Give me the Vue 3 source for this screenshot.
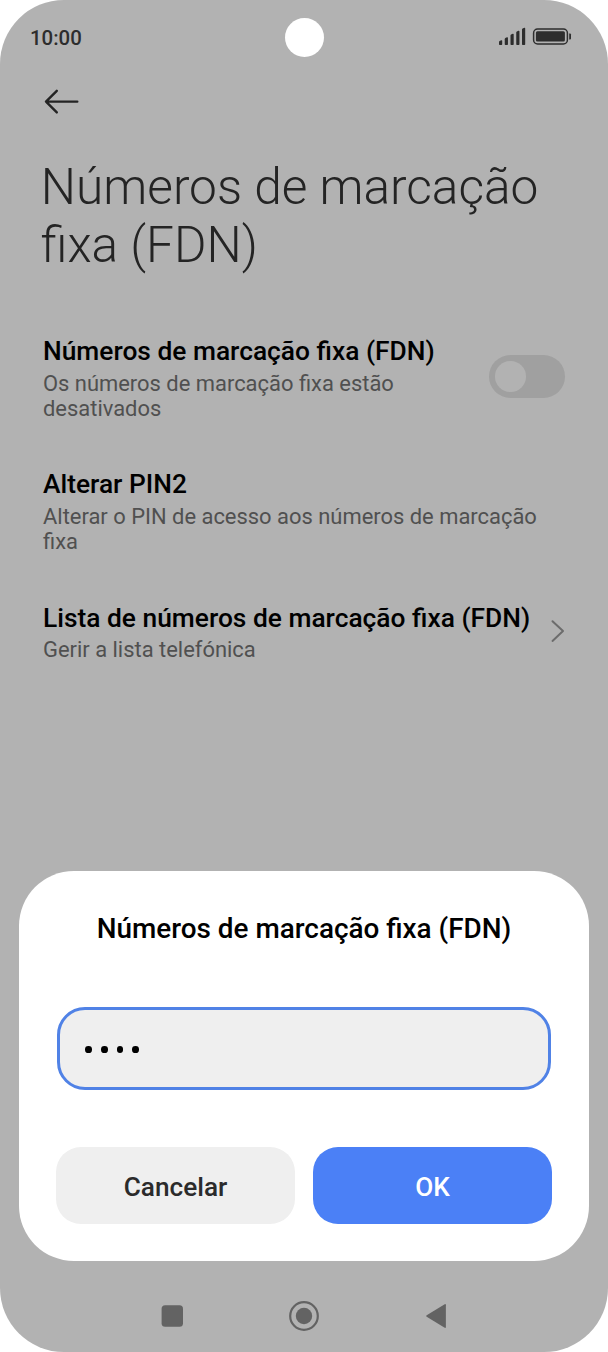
<script setup>
const bars = [4, 7, 10.5, 13.5, 16.5]
const digits = [0, 1, 2, 3]
</script>

<template>
  <div class="phone">
    <header class="status">
      <span class="time">10:00</span>
      <span class="camera"></span>
      <svg class="indicators" width="74" height="20" viewBox="0 0 74 20">
        <path
          v-for="(h, i) in bars"
          :key="i"
          :d="`M${i * 5.75} ${17.2}V${17.2 - h + 2}q0-.7.6-1.1l1.6-.9q1-.3 1 .8V17.2q0 .7-.7.7H${i * 5.75 + 0.7}q-.7 0-.7-.7z`"
          fill="#2d2d2d"
        />
        <rect x="34.6" y="2" width="33.8" height="14.9" rx="4" fill="none" stroke="#2d2d2d" stroke-width="1.5" />
        <rect x="36.9" y="4.3" width="29" height="10.3" rx="1.5" fill="#2d2d2d" />
        <path d="M70.2 6.5h.8q1 0 1 1v4q0 1-1 1h-.8z" fill="#2d2d2d" />
      </svg>
    </header>

    <nav class="toolbar">
      <svg width="36" height="28" viewBox="0 0 36 28" fill="none" stroke="#242424" stroke-width="2.4" stroke-linecap="round" stroke-linejoin="round">
        <path d="M13.8 2.8L3 13.6l10.8 10.8M3 13.6h31.3" />
      </svg>
    </nav>

    <h1 class="heading">Números de marcação<br />fixa (FDN)</h1>

    <main class="list">
      <section class="item">
        <h2 class="name">Números de marcação fixa (FDN)</h2>
        <p class="note">Os números de marcação fixa estão<br />desativados</p>
        <span class="switch"><span class="knob"></span></span>
      </section>
      <section class="item">
        <h2 class="name">Alterar PIN2</h2>
        <p class="note">Alterar o PIN de acesso aos números de marcação<br />fixa</p>
      </section>
      <section class="item short">
        <h2 class="name">Lista de números de marcação fixa (FDN)</h2>
        <p class="note">Gerir a lista telefónica</p>
        <svg class="chevron" width="14" height="24" viewBox="0 0 14 24" fill="none" stroke="#6c6c6c" stroke-width="2" stroke-linecap="round" stroke-linejoin="round">
          <path d="M1.5 2.3l10.5 9.8L1.5 21.9" />
        </svg>
      </section>
    </main>

    <div class="dialog">
      <h2 class="dialog-title">Números de marcação fixa (FDN)</h2>
      <div class="field">
        <span v-for="d in digits" :key="d" class="dot"></span>
      </div>
      <div class="actions">
        <button class="btn">Cancelar</button>
        <button class="btn primary">OK</button>
      </div>
    </div>

    <footer class="navbar">
      <svg width="22" height="22" viewBox="0 0 22 22"><rect x=".6" y=".2" width="21.4" height="21.6" rx="3.5" fill="#636363" /></svg>
      <svg width="30" height="30" viewBox="0 0 30 30">
        <circle cx="15" cy="15" r="13.8" fill="none" stroke="#636363" stroke-width="2.2" />
        <circle cx="15" cy="15" r="8.2" fill="#636363" />
      </svg>
      <svg width="22" height="26" viewBox="0 0 22 26"><path d="M1.7 12.2L19.3 1.4q1.6-.9 1.6.9v21.4q0 1.8-1.6.9L1.7 13.8q-1.2-.8 0-1.6z" fill="#636363" /></svg>
    </footer>
  </div>
</template>

<style>
body {
  background: #fff;
}
</style>

<style scoped>
.phone {
  position: relative;
  box-sizing: border-box;
  width: 608px;
  height: 1352px;
  border-radius: 64px;
  overflow: hidden;
  background: #b2b2b2;
  font-family: Roboto, "Liberation Sans", sans-serif;
}
h1, h2, p {
  margin: 0;
}
.status {
  display: grid;
  grid-template-columns: 1fr 39px 1fr;
  align-items: center;
  height: 74px;
  padding: 0 35px 0 30px;
}
.time {
  padding-top: 1px;
  font-size: 20.4px;
  font-weight: 500;
  line-height: 24px;
  color: #2d2d2d;
}
.camera {
  width: 39px;
  height: 39px;
  margin-left: 2.5px;
  border-radius: 50%;
  background: #fff;
}
.indicators {
  justify-self: end;
}
.toolbar {
  height: 28px;
  padding: 14px 0 0 43px;
}
.toolbar svg {
  display: block;
}
.heading {
  margin: 42px 0 0 40.8px;
  font-size: 49.6px;
  font-weight: 300;
  line-height: 58px;
  color: #242424;
  white-space: nowrap;
}
.list {
  margin-top: 61px;
  padding: 0 43px;
}
.item {
  display: grid;
  grid-template-columns: 1fr auto;
  grid-template-rows: 35.6px auto;
  height: 86.6px;
  margin-bottom: 46.7px;
  white-space: nowrap;
}
.item.short {
  height: 61px;
}
.name {
  width: 0;
  font-size: 26.35px;
  font-weight: 500;
  line-height: 32px;
  color: #000;
}
.note {
  grid-column: 1;
  grid-row: 2;
  width: 0;
  font-size: 21.93px;
  line-height: 25.5px;
  color: #505050;
}
.switch {
  grid-column: 2;
  grid-row: 1 / 3;
  align-self: start;
  box-sizing: border-box;
  width: 76px;
  height: 43px;
  margin-top: 20px;
  padding: 6px;
  border-radius: 22px;
  background: #a0a0a0;
}
.knob {
  display: block;
  width: 31px;
  height: 31px;
  border-radius: 50%;
  background: #b2b2b2;
}
.chevron {
  grid-column: 2;
  grid-row: 1 / 3;
  align-self: start;
  margin-top: 17.5px;
}
.dialog {
  position: absolute;
  left: 19px;
  top: 871px;
  box-sizing: border-box;
  width: 570px;
  height: 390px;
  padding: 41px 37px 37px;
  border-radius: 55px;
  background: #fff;
}
.dialog-title {
  font-size: 27.9px;
  font-weight: 500;
  line-height: 34px;
  text-align: center;
  white-space: nowrap;
}
.field {
  display: flex;
  align-items: center;
  gap: 9px;
  box-sizing: border-box;
  height: 83px;
  margin: 61px 1px 0;
  padding: 2px 0 0 25.4px;
  border: 3px solid #5082e6;
  border-radius: 28px;
  background: #efefef;
}
.dot {
  width: 6.7px;
  height: 6.7px;
  border-radius: 50%;
  background: #000;
}
.actions {
  display: grid;
  grid-template-columns: 1fr 1fr;
  gap: 18px;
  margin-top: 57px;
}
.btn {
  height: 77px;
  padding: 2px 0 0;
  border: 0;
  border-radius: 25px;
  background: #efefef;
  font: 500 26.2px/32px Roboto, "Liberation Sans", sans-serif;
  color: #2b2b2b;
}
.primary {
  background: #4b80f6;
  color: #fff;
}
.navbar {
  position: absolute;
  left: 161px;
  top: 1301px;
  display: flex;
  align-items: center;
  justify-content: space-between;
  width: 286px;
  height: 30px;
}
</style>
